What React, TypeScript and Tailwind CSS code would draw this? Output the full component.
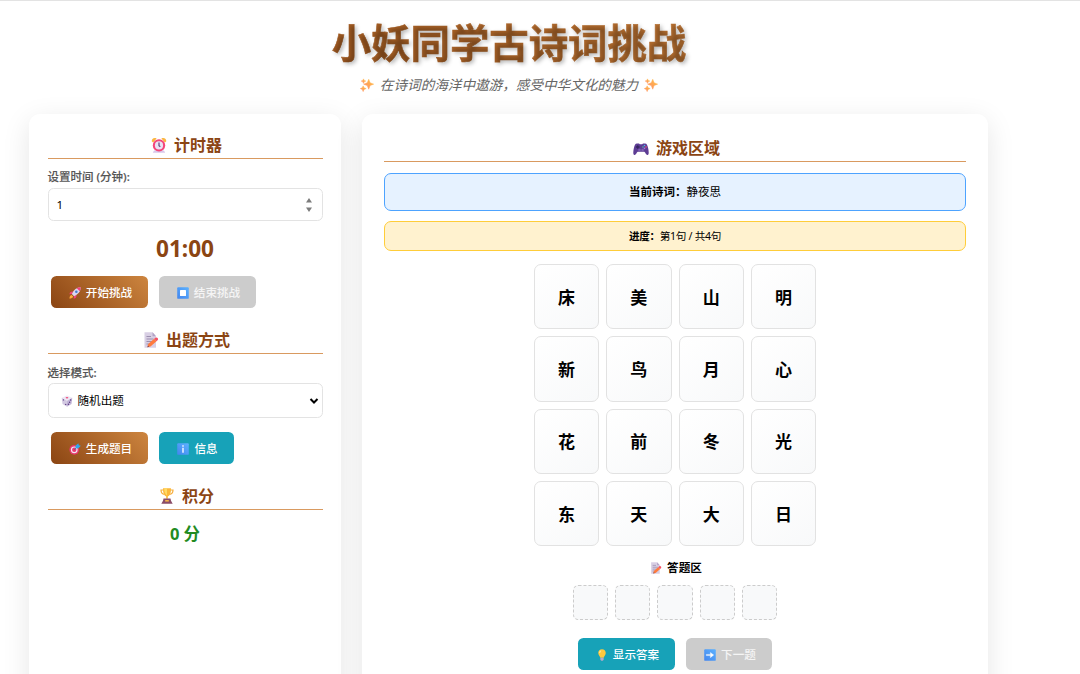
import type { ReactNode } from 'react';

type IconProps = { className?: string };

const Sparkles = ({ className }: IconProps) => (
  <svg viewBox="0 0 16 16" className={className}>
    <defs>
      <linearGradient id="spark" x1="0" y1="1" x2="1" y2="0">
        <stop offset="0" stopColor="#ff8a6b" />
        <stop offset="1" stopColor="#ffc33d" />
      </linearGradient>
    </defs>
    <g fill="url(#spark)" stroke="url(#spark)" strokeWidth=".6" strokeLinejoin="round">
      <path d="M10 1.500 11.500 5.500 15.600 7 11.500 8.600 10 12.800 8.300 8.600 4.200 7 8.300 5.500Z" />
      <path d="M3.600 9 4.600 11.200 7 12.100 4.600 13.100 3.600 15.500 2.600 13.100 .4 12.100 2.600 11.200Z" />
      <path d="M4 1 4.800 2.800 6.600 3.500 4.800 4.300 4 6.100 3.200 4.300 1.400 3.500 3.200 2.800Z" />
    </g>
  </svg>
);

const Clock = ({ className }: IconProps) => (
  <svg viewBox="0 0 16 16" className={className}>
    <path d="M3 13.500h10l1.200 2.200H1.800z" fill="#d9c8ea" />
    <path d="M.8 4.600C.2 1.800 3 .2 5.600 1.400L2.200 5.400z" fill="#fbb540" />
    <path d="M15.200 4.600C15.800 1.800 13 .2 10.400 1.400l3.400 4z" fill="#fbb540" />
    <circle cx="8" cy="8.400" r="6.200" fill="#f4457a" />
    <circle cx="8" cy="8.400" r="4.100" fill="#e9e1f3" />
    <path d="M8 5.600v3.100l1.300 1" stroke="#65447e" strokeWidth="1.200" fill="none" />
  </svg>
);

const Memo = ({ className }: IconProps) => (
  <svg viewBox="0 0 16 16" className={className}>
    <path d="M1.500.3h8l3.500 4v11.400H1.500z" fill="#d8cfe4" />
    <path d="M9.500.3v4H13z" fill="#b3a3c6" />
    <path d="M3.500 4.500h4.500M3.500 7h7M3.500 9.500h6M3.500 12h3" stroke="#9c8faf" strokeWidth="1" />
    <path d="m4.400 15.200.8-3.200 6-5.200 2.300 2.500-6 5.200z" fill="#ff7b3d" />
    <path d="m11.200 6.800 1.300-1.100c1.600-.8 3.200.9 2.300 2.400l-1.300 1.200z" fill="#f64f65" />
    <path d="m4.400 15.200.5-1.800 1.300 1.400z" fill="#6b4b60" />
  </svg>
);

const Trophy = ({ className }: IconProps) => (
  <svg viewBox="0 0 16 16" className={className}>
    <path d="M4.500 2H2c0 2.700 1 4.200 3.600 4.300M11.500 2H14c0 2.700-1 4.200-3.600 4.300" fill="none" stroke="#f6ad3c" strokeWidth="1.200" />
    <path d="M4 .2h8c.2 4.600-1 7.400-3.200 8.200v2.400H7.200V8.400C5 7.600 3.800 4.800 4 .2z" fill="#fcb83b" />
    <path d="M5.200.2h2.800v7.200C6.200 6.300 5.200 3.800 5.200.2z" fill="#ffda66" />
    <path d="M4.500 10.500h7l.5 2.200 1.700 3H2.300l1.700-3z" fill="#8b4d68" />
    <path d="M6.200 12h3.600v1.600H6.200z" fill="#f5b348" />
  </svg>
);

const Gamepad = ({ className }: IconProps) => (
  <svg viewBox="0 0 16 16" className={className}>
    <path d="M4 3.500h2l.8.8h2.400l.8-.8h2c1.800 0 2.500 1.700 3.100 4.600.6 2.800 1.200 6.600-.5 6.900-1.600.3-2-2.400-3.300-3.200H4.700C3.400 12.600 3 15.300 1.400 15-.3 14.700.3 10.900.9 8.100 1.500 5.200 2.200 3.500 4 3.500z" fill="#5d3c94" />
    <path d="M4.700 5.200v3.600M2.900 7h3.600" stroke="#35265f" strokeWidth="1.300" />
    <circle cx="6.500" cy="10" r="1.300" fill="#7e62b5" />
    <circle cx="9.600" cy="10" r="1.300" fill="#7e62b5" />
    <circle cx="11.500" cy="5.500" r=".8" fill="#52b4ef" />
    <circle cx="13" cy="7" r=".8" fill="#f05572" />
    <circle cx="10" cy="7" r=".8" fill="#4cc3a5" />
    <circle cx="11.500" cy="8.400" r=".8" fill="#a17be0" />
  </svg>
);

const Rocket = ({ className }: IconProps) => (
  <svg viewBox="0 0 16 16" className={className}>
    <path d="M5 5.500 1.500 7 .5 9.800l4-.6zM10.500 11 9 14.500l-2.800 1 .6-4z" fill="#f0417b" />
    <path d="M15.500.5C10.500.4 6.500 3.500 3.800 9.300l2.900 2.900C12.500 9.500 15.600 5.500 15.500.5z" fill="#dcd5ef" />
    <path d="M15.500.5c-2-.1-3.600.3-5.200 1.200l4 4c.9-1.600 1.300-3.200 1.200-5.200z" fill="#f0417b" />
    <circle cx="9.800" cy="6.200" r="1.700" fill="#437ed0" />
    <path d="M3.400 10.500C1.300 11 .7 13 .6 15.400 3 15.300 5 14.700 5.500 12.600z" fill="#ffad3d" />
  </svg>
);

const BlueSquare = () => (
  <>
    <defs>
      <linearGradient id="blueSquare" x1="0" y1="1" x2="1" y2="0">
        <stop offset="0" stopColor="#4285ee" />
        <stop offset="1" stopColor="#5cb2ff" />
      </linearGradient>
    </defs>
    <rect x=".3" y=".3" width="15.400" height="15.400" rx="1.200" fill="url(#blueSquare)" />
  </>
);

const StopSquare = ({ className }: IconProps) => (
  <svg viewBox="0 0 16 16" className={className}>
    <BlueSquare />
    <rect x="4" y="4" width="8" height="8" rx=".8" fill="#fff" />
  </svg>
);

const Dice = ({ className }: IconProps) => (
  <svg viewBox="0 0 16 16" className={className}>
    <path d="m8 .5 7 3.200L8 7.500 1 3.700z" fill="#eee8f5" />
    <path d="m1 3.700 7 3.800v8L2 12z" fill="#d3c9e2" />
    <path d="m15 3.700-7 3.800v8L14 12z" fill="#c3b6d8" />
    <ellipse cx="8" cy="3.700" rx="1.800" ry="1" fill="#ef4c78" />
    <g fill="#5b3a82">
      <circle cx="3.300" cy="6.500" r=".9" />
      <circle cx="6.300" cy="12.500" r=".9" />
      <circle cx="12.800" cy="6.800" r="1" />
      <circle cx="9.900" cy="12.300" r="1" />
      <circle cx="11.400" cy="9.500" r="1" />
    </g>
  </svg>
);

const Target = ({ className }: IconProps) => (
  <svg viewBox="0 0 16 16" className={className}>
    <circle cx="7" cy="9" r="6.500" fill="#e8386d" />
    <circle cx="7" cy="9" r="4.500" fill="#f1e6f4" />
    <circle cx="7" cy="9" r="2.900" fill="#e8386d" />
    <path d="m7 9 4-4" stroke="#4c6797" strokeWidth="1.200" />
    <path d="M8.500 7.200 8.900 3.300 12.500.2l.6 2.700 2.700.6L12.600 7z" fill="#2fa8ee" />
  </svg>
);

const Info = ({ className }: IconProps) => (
  <svg viewBox="0 0 16 16" className={className}>
    <BlueSquare />
    <path d="M7.100 3h1.800v1.900H7.100zM7.100 6.300h1.800V13H7.100z" fill="#fff" />
  </svg>
);

const Bulb = ({ className }: IconProps) => (
  <svg viewBox="0 0 16 16" className={className}>
    <path d="M8 .3c3 0 5 2.200 5 4.900 0 2.600-2.200 3.900-2.700 6.300H5.700C5.200 9.100 3 7.800 3 5.200 3 2.500 5 .3 8 .3z" fill="#ffc83d" />
    <path d="M7 1.500c-2 .6-3 2-2.800 4.200C5.600 5 6.800 3.500 7 1.500z" fill="#ffe89a" />
    <path d="M5.800 11.500h4.400v2.700L9 15.700H7l-1.200-1.500z" fill="#b7a9c9" />
  </svg>
);

const ArrowSquare = ({ className }: IconProps) => (
  <svg viewBox="0 0 16 16" className={className}>
    <BlueSquare />
    <path d="M3 7.200h5.500V4.500L13 8l-4.500 3.500V8.800H3z" fill="#fff" stroke="#fff" strokeWidth=".4" />
  </svg>
);

const characters = ['床', '美', '山', '明', '新', '鸟', '月', '心', '花', '前', '冬', '光', '东', '天', '大', '日'];

const tones = {
  brown: 'bg-linear-[45deg,#8b4513,#cd853f] text-white',
  teal: 'bg-[#17a2b8] text-white',
  muted: 'bg-[#cccccc] text-white/80',
};

function Button({ tone, icon, width, children }: { tone: keyof typeof tones; icon: ReactNode; width: string; children: ReactNode }) {
  return (
    <button className={`flex h-8 items-center justify-center gap-[5px] rounded-[5.500px] pt-px pl-[2px] text-[11.6px] font-medium whitespace-nowrap ${tones[tone]} ${width}`}>
      {icon}
      <span>{children}</span>
    </button>
  );
}

function Heading({ icon, className, children }: { icon: ReactNode; className: string; children: ReactNode }) {
  return (
    <h3 className={`flex shrink-0 items-center justify-center gap-[7px] border-b border-[#d99a60] pl-[3px] text-[16px] font-bold text-[#8b4513] ${className}`}>
      {icon}
      <span>{children}</span>
    </h3>
  );
}

export default function App() {
  return (
    <div className="h-[674px] w-[1080px] overflow-hidden border-t border-[#e3e3e3] bg-white font-['Noto_Sans','Noto_Sans_CJK_SC',sans-serif] leading-none text-black">
      <header className="ml-[29px] flex w-[960px] flex-col items-center pt-[12px]">
        <h1 className="mb-[2px] h-[60px] w-full bg-linear-[45deg,#8b4513,#cd853f] bg-clip-text text-center text-[39.4px] leading-[60px] font-bold text-transparent [-webkit-text-stroke:0.6px_transparent] [text-shadow:2px_2px_4px_rgba(0,0,0,0.3)]">
          小妖同学古诗词挑战
        </h1>
        <p className="flex h-5 items-center gap-[6px] text-[13.6px] text-[#666] italic">
          <Sparkles className="size-[14px]" />
          <span>在诗词的海洋中遨游，感受中华文化的魅力</span>
          <Sparkles className="size-[14px]" />
        </p>
      </header>

      <main className="mt-[19px] ml-[29px] flex gap-[21px]">
        <section className="h-[640px] w-[312px] rounded-[11px] bg-white px-[18.500px] pt-[17px] shadow-[0_7px_28px_rgba(0,0,0,0.1)]">
          <Heading className="h-7" icon={<Clock className="size-4" />}>计时器</Heading>
          <label className="mt-[10px] flex h-4 items-center text-[11.500px] font-medium text-[#555] [-webkit-text-stroke:0.15px_#555]">设置时间 (分钟):</label>
          <div className="mt-[3px] flex h-[33px] items-center justify-between rounded-[5.500px] border border-[#e3e3e3] pr-[10px] pl-[8px] text-[11.6px]">
            <span className="pt-px">1</span>
            <svg viewBox="0 0 6 14" className="h-[14px] w-[6px]" fill="#7c7c7c">
              <path d="M3 0 6 4.500H0zM3 14 0 9.500h6z" />
            </svg>
          </div>
          <div className="mt-[16px] flex h-6 items-center justify-center text-[22.600px] font-bold text-[#8b4513]">01:00</div>
          <div className="mt-[15px] flex gap-[11px] pl-[3.500px]">
            <Button tone="brown" width="w-[97px]" icon={<Rocket className="size-3" />}>开始挑战</Button>
            <Button tone="muted" width="w-[97px]" icon={<StopSquare className="size-3" />}>结束挑战</Button>
          </div>

          <Heading className="mt-[19px] h-[27px]" icon={<Memo className="size-4" />}>出题方式</Heading>
          <label className="mt-[11px] flex h-4 items-center text-[11.500px] font-medium text-[#555] [-webkit-text-stroke:0.15px_#555]">选择模式:</label>
          <div className="mt-[2px] flex h-[35px] items-center rounded-[5.500px] border border-[#e3e3e3] pr-[3px] pl-[12px] text-[11.6px]">
            <Dice className="mr-[5px] size-3" />
            <span className="flex-1">随机出题</span>
            <svg viewBox="0 0 10 8" className="h-2 w-[10px]" fill="none" stroke="#000" strokeWidth="2">
              <path d="m1.500 2 3.500 3.500L8.500 2" />
            </svg>
          </div>
          <div className="mt-[14px] flex gap-[11px] pl-[3.500px]">
            <Button tone="brown" width="w-[97px]" icon={<Target className="size-3" />}>生成题目</Button>
            <Button tone="teal" width="w-[75px]" icon={<Info className="size-3" />}>信息</Button>
          </div>

          <Heading className="mt-[19px] h-[27px]" icon={<Trophy className="size-4" />}>积分</Heading>
          <div className="mt-[12px] flex h-6 items-center justify-center text-[16.500px] font-bold text-[#228b22]">0 分</div>
        </section>

        <section className="flex h-[640px] w-[626px] flex-col items-center rounded-[11px] bg-white px-[22px] pt-[21px] shadow-[0_7px_28px_rgba(0,0,0,0.1)]">
          <Heading className="h-[27px] w-full" icon={<Gamepad className="size-4" />}>游戏区域</Heading>
          <div className="mt-[11px] flex h-[38px] w-full shrink-0 items-center justify-center rounded-[7px] border border-[#4da3ff] bg-[#e6f2ff] text-[11.500px]">
            <b>当前诗词：</b>静夜思
          </div>
          <div className="mt-[10px] flex h-[29.500px] w-full shrink-0 items-center justify-center rounded-[7px] border border-[#ffcd39] bg-[#fff2cf] pt-px text-[10.600px] tracking-[-0.3px]">
            <b>进度：</b>第1句 / 共4句
          </div>
          <div className="mt-[13.500px] grid grid-cols-4 gap-[7px]">
            {characters.map((c) => (
              <div key={c} className="flex size-[65.300px] items-center justify-center rounded-[7px] border border-[#e2e2e2] bg-linear-[145deg,#ffffff,#f8f9fa] pt-px text-[17px] font-bold">
                {c}
              </div>
            ))}
          </div>
          <div className="mt-[14px] flex h-4 items-center gap-[5px] pl-[2px] text-[11.6px] font-bold">
            <Memo className="size-3" />
            <span>答题区</span>
          </div>
          <div className="mt-[9px] flex gap-[7px]">
            {[0, 1, 2, 3, 4].map((i) => (
              <div key={i} className="size-[35.300px] rounded-[5.500px] border border-dashed border-[#ccc] bg-[#f8f9fa]" />
            ))}
          </div>
          <div className="mt-[18px] flex gap-[11px]">
            <Button tone="teal" width="w-[97px]" icon={<Bulb className="size-3" />}>显示答案</Button>
            <Button tone="muted" width="w-[86px]" icon={<ArrowSquare className="size-3" />}>下一题</Button>
          </div>
        </section>
      </main>
    </div>
  );
}
